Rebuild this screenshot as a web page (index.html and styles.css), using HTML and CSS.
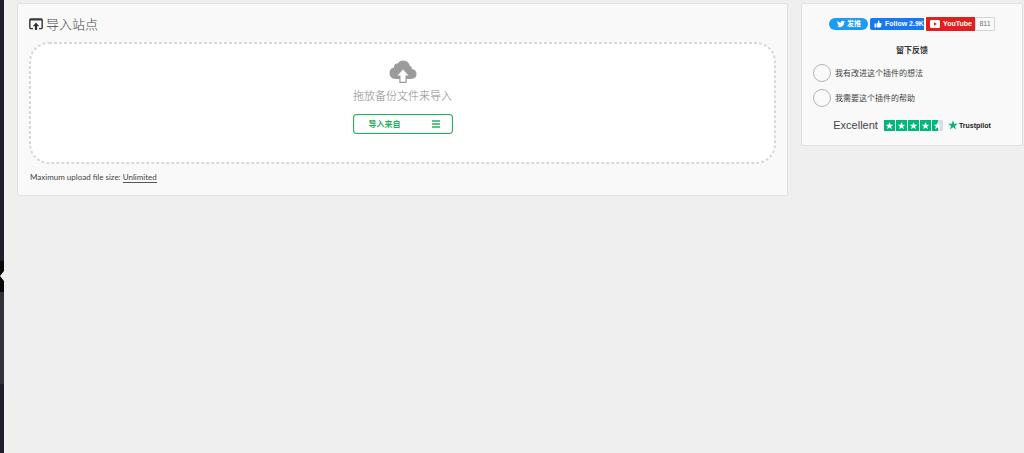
FILE: index.html
```html
<!DOCTYPE html>
<html lang="zh-CN">
<head>
<meta charset="utf-8">
<title>导入站点</title>
<link rel="stylesheet" href="styles.css">
</head>
<body>
<div class="app">
  <nav class="rail" aria-label="菜单">
    <span class="rail-top"></span>
    <span class="rail-current"></span>
    <span class="rail-submenu"></span>
  </nav>
  <main class="content">
    <section class="card import">
      <h1 class="title">
        <svg class="title-icon" viewBox="0 0 14 12" aria-hidden="true"><path d="M4 10.600H1.800Q.8 10.600.8 9.600V2Q.8 1 1.800 1H12.200Q13.200 1 13.200 2V9.600Q13.200 10.600 12.200 10.600H10" fill="none" stroke="#333" stroke-width="1.400"/><path d="M1 1.200H13V2.600H1zM7 4.600L10.200 8.200H8.100V12H5.900V8.200H3.800z" fill="#333"/></svg>
        导入站点
      </h1>
      <div class="dropzone">
        <svg class="outline" aria-hidden="true"><rect class="outline-shape" x="1" y="1" rx="19"/></svg>
        <svg class="cloud" viewBox="0 0 28 23" aria-hidden="true"><path d="M6.500 19Q.5 18.500.5 13Q.5 8.500 5 7.600Q4.900 3.500 8.800 3.600Q10.500.5 14.500.5Q19.500.6 21 6Q23.200 6.500 23 9Q27.500 9.800 27.500 14Q27.500 18.800 22 19z" fill="#9b9b9b"/><path d="M10.300 15.500H17.700V23H10.300z" fill="#9b9b9b"/><path d="M14 9.500L19.500 15.500H16.500V21.800H11.500V15.500H8.500z" fill="#fff"/></svg>
        <p class="drop-text">拖放备份文件来导入</p>
        <button class="import-button" type="button">
          <span>导入来自</span>
          <svg class="menu-icon" viewBox="0 0 8 8" aria-hidden="true"><path d="M0 1H8M0 4H8M0 7H8" stroke="#27ae60" stroke-width="1.400"/></svg>
        </button>
      </div>
      <p class="limit">Maximum upload file size: <a href="#">Unlimited</a></p>
    </section>
    <aside class="card feedback">
      <div class="social">
        <a class="tweet" href="#"><svg class="bird" viewBox="0 0 24 24" aria-hidden="true"><path fill="#fff" d="M23.950 4.570a10 10 0 0 1-2.820.770 4.960 4.960 0 0 0 2.160-2.720c-.950.550-2 .950-3.130 1.180a4.920 4.920 0 0 0-8.380 4.480C7.690 8.090 4.070 6.130 1.640 3.160a4.920 4.920 0 0 0 1.520 6.570 4.900 4.900 0 0 1-2.230-.610v.060a4.920 4.920 0 0 0 3.950 4.830 5 5 0 0 1-2.210.080 4.940 4.940 0 0 0 4.600 3.420A9.870 9.870 0 0 1 0 19.540a14 14 0 0 0 7.550 2.210c9.050 0 14-7.500 14-13.980l-.020-.630a9.940 9.940 0 0 0 2.420-2.570z"/></svg>发推</a>
        <a class="follow" href="#"><svg class="thumb" viewBox="0 0 16 16" aria-hidden="true"><path fill="#fff" d="M1 7H4.500V15H1zM5.500 7.500L8 5V2Q8 1 9 1Q11 1 11 3.500L10.500 6H14Q15.500 6.200 15.200 7.800L14 13.500Q13.600 15 12 15H7.500L5.500 14z"/></svg>Follow 2.9K</a>
        <a class="youtube" href="#"><svg class="play" viewBox="0 0 10 8" aria-hidden="true"><rect width="10" height="8" rx="1.500" fill="#fff"/><path d="M4 2.200L7 4L4 5.800z" fill="#e02020"/></svg>YouTube</a><span class="count">811</span>
      </div>
      <h2 class="feedback-title">留下反馈</h2>
      <form class="options">
        <label class="option"><input type="radio" name="feedback" value="idea">我有改进这个插件的想法</label>
        <label class="option"><input type="radio" name="feedback" value="help">我需要这个插件的帮助</label>
      </form>
      <div class="trust">
        <span class="rating">Excellent</span>
        <svg class="stars" viewBox="0 0 60 11" role="img" aria-label="4.5 / 5">
          <defs><path id="star" d="M0-4L1-1.300H3.800L1.600.4L2.400 3.200L0 1.500L-2.400 3.200L-1.600.4L-3.800-1.300H-1z"/></defs>
          <path d="M0 0H11V11H0zM12 0H23V11H12zM24 0H35V11H24zM36 0H47V11H36zM48 0H54V11H48z" fill="#00b67a"/><path d="M54 0H59V11H54z" fill="#dcdce6"/>
          <g fill="#fff"><use href="#star" x="5.500" y="6"/><use href="#star" x="17.500" y="6"/><use href="#star" x="29.500" y="6"/><use href="#star" x="41.500" y="6"/><use href="#star" x="53.500" y="6"/></g>
        </svg>
        <a class="trustpilot" href="#"><svg class="trust-star" viewBox="0 0 10 10" aria-hidden="true"><path d="M5 .3L6.200 3.800H9.900L6.900 6L8 9.500L5 7.300L2 9.500L3.100 6L.1 3.800H3.800z" fill="#00b67a"/></svg>Trustpilot</a>
      </div>
    </aside>
  </main>
</div>
</body>
</html>
```
FILE: styles.css
```css
* { box-sizing: border-box; }
body {
  margin: 0;
  background: #efefef;
  color: #444;
  font-family: "Open Sans", "Noto Sans CJK SC", sans-serif;
  font-size: 8px;
}
h1, h2, p { margin: 0; }
a { color: inherit; text-decoration: none; }
svg { flex: none; }
.app { display: flex; min-height: 100vh; }
.rail {
  display: flex;
  flex-direction: column;
  flex: 0 0 4px;
  background: #211f2b;
}
.rail-top { height: 261px; }
.rail-current {
  position: relative;
  height: 31px;
  background: #090909;
}
.rail-current::after {
  content: "";
  position: absolute;
  right: 0;
  top: 10px;
  border: 5px solid transparent;
  border-left: 0;
  border-right: 4px solid #efefef;
}
.rail-submenu { height: 92px; background: #32313a; }
.content {
  display: flex;
  align-items: flex-start;
  flex: 1;
  gap: 13px;
  padding: 3px 1px 0 13px;
}
.card {
  background: #f9f9f9;
  border: 1px solid #e1e1e1;
  border-radius: 2px;
}
.import { flex: 1; padding: 11px 11px 12px; }
.title {
  display: flex;
  align-items: center;
  gap: 3px;
  height: 18px;
  margin-bottom: 9px;
  color: #444;
  font-size: 13px;
  font-weight: 300;
  line-height: 18px;
}
.title-icon { width: 14px; height: 12px; }
.dropzone {
  position: relative;
  display: flex;
  flex-direction: column;
  align-items: center;
  min-height: 122px;
  padding: 18px 0 28px;
  background: #fff;
  border-radius: 20px;
}
.outline {
  position: absolute;
  inset: 0;
  width: 100%;
  height: 100%;
  pointer-events: none;
}
.outline-shape {
  width: calc(100% - 2px);
  height: calc(100% - 2px);
  fill: none;
  stroke: #d8d8d8;
  stroke-width: 2px;
  stroke-dasharray: 3 2;
}
.cloud { width: 28px; height: 23px; }
.drop-text {
  margin: 5px 0 10px;
  color: #888;
  font-size: 11px;
  font-weight: 300;
  line-height: 16px;
}
.import-button {
  display: flex;
  align-items: center;
  justify-content: space-between;
  width: 100px;
  height: 20px;
  padding: 0 12px 0 15px;
  background: #fff;
  border: 1px solid #27ae60;
  border-radius: 3px;
  box-shadow: inset 0 0 1px #27ae60;
  color: #27ae60;
  font: 600 8px/12px "Open Sans", "Noto Sans CJK SC", sans-serif;
}
.menu-icon { width: 8px; height: 8px; }
.limit { margin-top: 7px; padding-left: 1px; line-height: 12px; font-family: Lato, sans-serif; }
.limit a { border-bottom: 1px solid #555; }
.feedback { flex: 0 0 222px; padding: 12px 11px 14px; }
.social {
  display: flex;
  align-items: center;
  justify-content: center;
  height: 16px;
  font: 700 7px/12px "Liberation Sans", "Noto Sans CJK SC", sans-serif;
  color: #fff;
}
.social a {
  display: flex;
  align-items: center;
  gap: 3px;
  white-space: nowrap;
}
.social .tweet {
  width: 39px;
  height: 12px;
  margin-right: 2px;
  padding-left: 8px;
  gap: 2px;
  border-radius: 6px;
  background: #1d9bf0;
}
.bird { width: 8px; height: 8px; }
.social .follow {
  width: 54px;
  height: 12px;
  margin-right: 2px;
  padding-left: 4px;
  overflow: hidden;
  border-radius: 2px 0 0 2px;
  background: #1877f2;
}
.thumb { width: 8px; height: 8px; }
.social .youtube {
  width: 49px;
  height: 14px;
  padding-left: 4px;
  border-radius: 1px 0 0 1px;
  background: #e02020;
}
.play { width: 10px; height: 8px; }
.count {
  width: 20px;
  height: 14px;
  border: 1px solid #d5d5d5;
  border-radius: 0 1px 1px 0;
  color: #777;
  font-weight: 400;
  text-align: center;
}
.feedback-title {
  margin: 12px 0 8px;
  color: #333;
  font-size: 8px;
  font-weight: 700;
  line-height: 12px;
  text-align: center;
}
.options { display: flex; flex-direction: column; gap: 7px; }
.option { display: flex; align-items: center; gap: 4px; line-height: 12px; }
.option input {
  appearance: none;
  width: 18px;
  height: 18px;
  margin: 0;
  border: 1px solid #b4b4b4;
  border-radius: 50%;
  background: #fafafa;
}
.trust {
  display: flex;
  align-items: center;
  justify-content: center;
  height: 12px;
  margin-top: 12px;
  font-family: "Liberation Sans", sans-serif;
}
.rating { font-size: 11px; line-height: 12px; margin-right: 6px; }
.stars { width: 60px; height: 11px; margin-right: 4px; }
.trustpilot { display: flex; align-items: center; gap: 1px; color: #222; font-size: 7px; font-weight: 700; }
.trust-star { width: 10px; height: 10px; }
```
